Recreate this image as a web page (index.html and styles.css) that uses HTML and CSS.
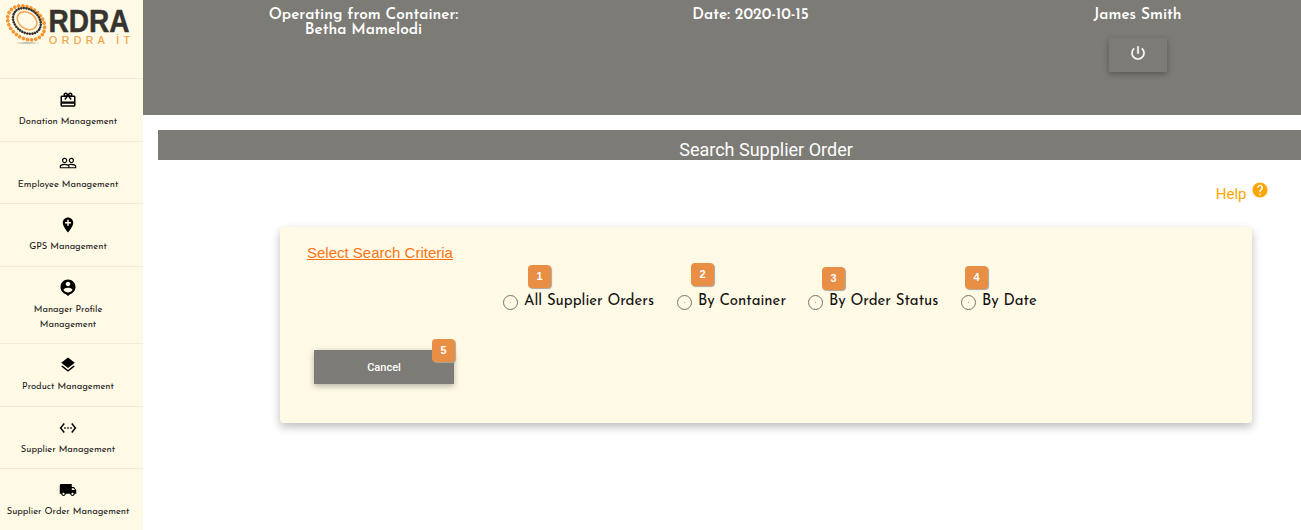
FILE: index.html
```html
<!DOCTYPE html>
<html lang="en">
<head>
<meta charset="utf-8">
<title>Search Supplier Order</title>
<link rel="stylesheet" href="styles.css">
</head>
<body>
<div class="app">
  <aside class="sidebar">
    <div class="brand">
      <svg class="logo" width="143" height="50" viewBox="0 0 143 50" role="img" aria-label="Ordra IT">
        <defs><radialGradient id="shade"><stop offset="0" stop-color="#8b8980" stop-opacity=".7"/><stop offset="1" stop-color="#8b8980" stop-opacity="0"/></radialGradient></defs>
        <ellipse cx="27" cy="43" rx="13" ry="1.6" fill="url(#shade)"/>
        <g fill="none" transform="rotate(36 26 23)">
          <ellipse cx="26" cy="22.8" rx="20" ry="15.2" stroke="#f8952f" stroke-width="3.7" stroke-linecap="round" stroke-dasharray="0 4.1"/>
          <ellipse cx="25.5" cy="20.8" rx="15" ry="11.6" stroke="#37322e" stroke-width="2.6" stroke-linecap="round" stroke-dasharray="0 2.6"/>
          <ellipse cx="25.5" cy="20.5" rx="10.6" ry="8" stroke="#f8a452" stroke-width="1.5"/>
        </g>
        <text class="logo-name" x="48.5" y="31.5" textLength="81" lengthAdjust="spacingAndGlyphs">RDRA</text>
        <text class="logo-sub" x="49" y="43.5" textLength="81">ORDRA İT</text>
      </svg>
    </div>
    <nav>
      <a class="item"><svg class="icon" viewBox="0 0 24 24"><path d="M20 6h-2.18c.11-.31.18-.65.18-1 0-1.66-1.34-3-3-3-1.05 0-1.96.54-2.5 1.35l-.5.67-.5-.68C10.96 2.54 10.05 2 9 2 7.34 2 6 3.34 6 5c0 .35.07.69.18 1H4c-1.11 0-1.99.89-1.99 2L2 19c0 1.11.89 2 2 2h16c1.11 0 2-.89 2-2V8c0-1.11-.89-2-2-2zm-5-2c.55 0 1 .45 1 1s-.45 1-1 1-1-.45-1-1 .45-1 1-1zM9 4c.55 0 1 .45 1 1s-.45 1-1 1-1-.45-1-1 .45-1 1-1zm11 15H4v-2h16v2zm0-5H4V8h5.08L7 10.83 8.62 12 11 8.76l1-1.36 1 1.36L15.38 12 17 10.83 14.92 8H20v6z"/></svg><span class="name">Donation Management</span></a>
      <a class="item"><svg class="icon" viewBox="0 0 24 24"><path d="M16.5 13c-1.2 0-3.07.34-4.5 1-1.43-.67-3.3-1-4.5-1C5.33 13 1 14.08 1 16.25V19h22v-2.75c0-2.17-4.33-3.25-6.5-3.25zm-4 4.5h-10v-1.25c0-.54 2.56-1.75 5-1.75s5 1.21 5 1.75v1.25zm9 0H14v-1.25c0-.46-.2-.86-.52-1.22.88-.3 1.96-.53 3.02-.53 2.44 0 5 1.21 5 1.75v1.25zM7.5 12c1.93 0 3.5-1.57 3.5-3.5S9.43 5 7.5 5 4 6.57 4 8.5 5.57 12 7.5 12zm0-5.5c1.1 0 2 .9 2 2s-.9 2-2 2-2-.9-2-2 .9-2 2-2zm9 5.5c1.93 0 3.5-1.57 3.5-3.5S18.43 5 16.5 5 13 6.57 13 8.5s1.57 3.5 3.5 3.5zm0-5.5c1.1 0 2 .9 2 2s-.9 2-2 2-2-.9-2-2 .9-2 2-2z"/></svg><span class="name">Employee Management</span></a>
      <a class="item"><svg class="icon" viewBox="0 0 24 24"><path d="M12 2C8.14 2 5 5.14 5 9c0 5.25 7 13 7 13s7-7.75 7-13c0-3.86-3.14-7-7-7zm4 8h-3v3h-2v-3H8V8h3V5h2v3h3v2z"/></svg><span class="name">GPS Management</span></a>
      <a class="item"><svg class="icon raised" viewBox="0 0 24 24"><path d="M12 2C6.48 2 2 6.48 2 12c0 4.42 2.87 8.17 6.84 9.49L12 24l3.16-2.51C19.13 20.17 22 16.42 22 12c0-5.52-4.48-10-10-10zm0 3c1.66 0 3 1.34 3 3s-1.34 3-3 3-3-1.34-3-3 1.34-3 3-3zm0 14.2c-2.5 0-4.71-1.28-6-3.22.03-1.99 4-3.08 6-3.08 1.99 0 5.97 1.09 6 3.08-1.29 1.94-3.5 3.22-6 3.22z"/></svg><span class="name">Manager Profile<br>Management</span></a>
      <a class="item"><svg class="icon" viewBox="0 0 24 24"><path d="M11.99 18.54l-7.37-5.73L3 14.07l9 7 9-7-1.63-1.27-7.38 5.74zM12 16l7.36-5.73L21 9l-9-7-9 7 1.63 1.27L12 16z"/></svg><span class="name">Product Management</span></a>
      <a class="item"><svg class="icon" viewBox="0 0 24 24"><path d="M7.77 6.76L6.23 5.48.82 12l5.41 6.52 1.54-1.28L3.42 12l4.35-5.24zM7 13h2v-2H7v2zm10-2h-2v2h2v-2zm-6 2h2v-2h-2v2zm6.77-7.52l-1.54 1.28L20.58 12l-4.35 5.24 1.54 1.28L23.18 12l-5.41-6.52z"/></svg><span class="name">Supplier Management</span></a>
      <a class="item"><svg class="icon" viewBox="0 0 24 24"><path d="M20 8h-3V4H3c-1.1 0-2 .9-2 2v11h2c0 1.66 1.34 3 3 3s3-1.34 3-3h6c0 1.66 1.34 3 3 3s3-1.34 3-3h2v-5l-3-4zM6 18.5c-.83 0-1.5-.67-1.5-1.5s.67-1.5 1.5-1.5 1.5.67 1.5 1.5-.67 1.5-1.5 1.5zm13.5-9l1.96 2.5H17V9.5h2.5zm-1.5 9c-.83 0-1.5-.67-1.5-1.5s.67-1.5 1.5-1.5 1.5.67 1.5 1.5-.67 1.5-1.5 1.5z"/></svg><span class="name">Supplier Order Management</span></a>
    </nav>
  </aside>
  <main class="main">
    <header class="topbar">
      <div class="info">Operating from Container:<br>Betha Mamelodi</div>
      <div class="info">Date: 2020-10-15</div>
      <div class="info">James Smith
        <button class="power" aria-label="Log out"><svg width="18" height="18" viewBox="0 0 24 24"><path fill="#fff" stroke="#fff" stroke-width=".3" d="M13 3h-2v10h2V3zm4.83 2.17l-1.42 1.42C17.99 7.86 19 9.81 19 12c0 3.87-3.13 7-7 7s-7-3.13-7-7c0-2.19 1.01-4.14 2.58-5.42L6.17 5.17C4.23 6.82 3 9.26 3 12c0 4.97 4.03 9 9 9s9-4.03 9-9c0-2.74-1.23-5.18-3.17-6.83z"/></svg></button>
      </div>
    </header>
    <h1 class="title">Search Supplier Order</h1>
    <div class="help"><span>Help</span><svg width="18" height="18" viewBox="0 0 24 24"><path fill="#ffa500" d="M12 2C6.48 2 2 6.48 2 12s4.48 10 10 10 10-4.48 10-10S17.52 2 12 2zm1 17h-2v-2h2v2zm2.07-7.75l-.9.92C13.45 12.9 13 13.5 13 15h-2v-.5c0-1.1.45-2.1 1.17-2.83l1.24-1.26c.37-.36.59-.86.59-1.41 0-1.1-.9-2-2-2s-2 .9-2 2H8c0-2.21 1.79-4 4-4s4 1.79 4 4c0 .88-.36 1.68-.93 2.25z"/></svg></div>
    <section class="card">
      <h2 class="criteria">Select Search Criteria</h2>
      <div class="options">
        <label class="option all"><i class="radio"></i><span class="label">All Supplier Orders</span><b class="badge b1">1</b></label>
        <label class="option container"><i class="radio"></i><span class="label">By Container</span><b class="badge b2">2</b></label>
        <label class="option status"><i class="radio"></i><span class="label">By Order Status</span><b class="badge b3">3</b></label>
        <label class="option date"><i class="radio"></i><span class="label">By Date</span><b class="badge b4">4</b></label>
      </div>
      <button class="cancel">Cancel<b class="badge b5">5</b></button>
    </section>
  </main>
</div>
</body>
</html>
```

FILE: styles.css
```css
* { box-sizing: border-box; }
body { margin: 0; height: 530px; overflow: hidden; background: #fff; font-family: "Josefin Sans", Lato, sans-serif; }
.app { display: flex; height: 530px; overflow: hidden; }
.sidebar { width: 143px; flex: none; background: #fffae6; }
.brand { height: 78px; }
.logo { display: block; }
.logo-name { font: bold 31px "Liberation Sans", sans-serif; fill: #37342f; stroke: #37342f; stroke-width: .5px; }
.logo-sub { font: 10.5px "Liberation Sans", sans-serif; fill: #f8a047; stroke: #f8a047; stroke-width: .2px; }
.item { display: flex; flex-direction: column; align-items: center; min-height: 62.5px; padding: 12px 7px 11.5px 0; border-top: 1px solid #f2ebdc; }
.icon { width: 18px; height: 18px; flex: none; }
.raised { margin: -1px 0 1px; }
.name { margin-top: 5px; font-size: 9.4px; line-height: 15px; text-align: center; white-space: nowrap; color: #222; }
.main { flex: 1; min-width: 0; }
.topbar { display: grid; grid-template-columns: repeat(3, 387px); height: 115px; padding-left: 27px; background: #7d7b76; overflow: hidden; }
.info { padding-top: 8px; text-align: center; color: #fff; font-size: 15.4px; font-weight: 600; line-height: 15px; }
.power { display: flex; align-items: center; justify-content: center; width: 58px; height: 34px; margin: 15px auto 0; padding: 0 0 4px; border: 0; background: #7d7b76; box-shadow: 0 2px 6px rgba(0,0,0,.3); }
.title { height: 30px; margin: 15px 0 0 15px; padding: 6px 0 0 73px; overflow: hidden; background: #7d7b76; color: #fff; text-align: center; font: 18px/27px Roboto, sans-serif; }
.help { display: flex; justify-content: flex-end; gap: 4.5px; height: 67px; padding: 21px 32px 0 0; color: #ffa500; font: 15px/26px Roboto, sans-serif; }
.card { width: 972px; height: 196px; margin-left: 137px; padding: 16px 27px; border-radius: 4px; background: #fffae6; box-shadow: 0 4px 10px rgba(0,0,0,.26); }
.criteria { margin: 0; color: #fb7312; font: 15px/20px "Liberation Sans", sans-serif; text-decoration: underline; }
.options { display: flex; gap: 23px; height: 87px; padding: 28px 0 0 196px; }
.option { position: relative; display: flex; height: 20px; color: #111; font-size: 15px; line-height: 20px; white-space: nowrap; }
.label { padding-top: 1px; }
.all { width: 151px; }
.container { width: 108px; }
.status { width: 130px; }
.radio { width: 15px; height: 15px; margin: 4px 6px 0 0; flex: none; border: 1px solid #77746b; border-radius: 50%; background: radial-gradient(circle, #ff9c91 .7px, transparent 1px); }
.cancel { position: relative; display: block; width: 140px; height: 34px; margin-left: 7px; padding: 1px 0 0; border: 0; background: #7d7b76; color: #fff; font: 500 11px/33px Roboto, sans-serif; box-shadow: 0 2px 6px rgba(0,0,0,.3); }
.badge { position: absolute; width: 23px; height: 23px; border-radius: 4px; background: #e88e45; color: #fff; text-align: center; font: bold 11px/23px "Liberation Sans", sans-serif; box-shadow: 1px 1px 1px #aaa69c; }
.b1 { left: 25px; top: -26px; }
.b2 { left: 14px; top: -28px; }
.b3 { left: 14px; top: -24px; }
.b4 { left: 4px; top: -25px; }
.b5 { left: 118px; top: -11px; }
```
